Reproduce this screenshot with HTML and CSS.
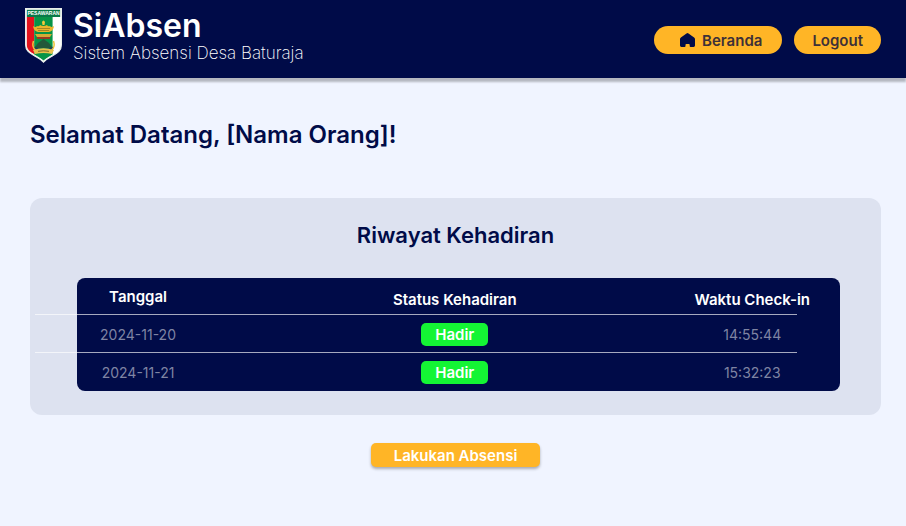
FILE: index.html
```html
<!DOCTYPE html>
<html lang="id">
<head>
  <meta charset="utf-8">
  <meta name="viewport" content="width=device-width, initial-scale=1">
  <title>SiAbsen</title>
  <link rel="stylesheet" href="styles.css">
</head>
<body>
  <header class="topbar">
    <div class="brand">
      <svg class="crest" viewBox="0 0 37 55" aria-hidden="true">
        <path d="M.6.6h35.8v36.2c0 6.4-4.800 8.600-9 11.100-3.600 2.100-6.600 3.600-8.900 6.300-2.300-2.700-5.300-4.200-8.900-6.300C5.400 45.400.6 43.200.6 36.800z" fill="#fff"/>
        <path d="M1.800 1.800h33.400v7.200H1.800z" fill="#087a48"/>
        <path d="M1.800 9h7.400v37.200c-4-2.300-7.400-4.400-7.400-9.400z" fill="#e3121b"/>
        <path d="M9.200 9h18.400v37.400c-3.500 2.100-6.800 3.700-9.100 6.200-2.300-2.500-5.600-4.100-9.300-6.200z" fill="#079447"/>
        <text class="crest-name" x="18.500" y="7.200" text-anchor="middle">PESAWARAN</text>
        <path d="M17 14q1.500-3 3 0l-.5 3h-2z" fill="#f5c83b"/>
        <path d="M8 18q2.500 2 4 0 2 1 3-1 3.500 2 7 0 1 2 3 1 1.500 2 4 0-.5 5-5 6H13q-4.500-1-5-6z" fill="#e9b52c"/>
        <path d="M12 20.500h13M13 22.500h11" stroke="#79651c" stroke-width=".6"/>
        <path d="M10 26h17l-2 3H12z" fill="#d5ab35"/>
        <path d="M12 29h13v2H12z" fill="#983a22"/>
        <path d="M8 40q3-1 5-5l5.500-4 5.500 4q2 4 5 5z" fill="#24583a"/>
        <path d="M9 39q9.500 4 19 0v3q-9.500 3-19 0z" fill="#173f67"/>
        <path d="M8.500 33q-2 6 2 9M28.500 33q2 6-2 9" fill="none" stroke="#edc43d" stroke-width="1.500"/>
        <path d="M8 42q10.500-3.500 21 0l-2 4q-8.500-2-17 0z" fill="#e9c24c"/>
        <path d="M13 43.300q5.500-1 11 0" fill="none" stroke="#594e20" stroke-width=".8"/>
        <path d="M.6.6h35.8v36.2c0 6.400-4.800 8.600-9 11.100-3.600 2.100-6.600 3.600-8.900 6.300-2.300-2.700-5.300-4.200-8.900-6.300C5.400 45.400.6 43.200.6 36.800z" fill="none" stroke="#e8eee9" stroke-width="1.200"/>
      </svg>
      <div class="brand-text">
        <h1 class="brand-name">SiAbsen</h1>
        <p class="brand-tagline">Sistem Absensi Desa Baturaja</p>
      </div>
    </div>
    <nav class="nav">
      <a class="pill pill-home" href="#">
        <svg class="home-icon" viewBox="0 0 15 14" aria-hidden="true">
          <path d="M6.500.4q1-.7 2 0l5.600 4.100q.9.700.9 1.800v6.300q0 1.400-1.400 1.400h-3q-.9 0-.9-.9v-1.300q0-.9-.9-.9H6.400q-.9 0-.9.900v1.300q0 .9-.9.9H1.400Q0 14 0 12.600V6.300q0-1.100.9-1.800z" fill="currentColor"/>
        </svg>
        Beranda
      </a>
      <button class="pill" type="button">Logout</button>
    </nav>
  </header>

  <main class="content">
    <h2 class="heading">Selamat Datang, [Nama Orang]!</h2>
    <section class="panel" aria-labelledby="history-title">
      <h2 class="heading panel-title" id="history-title">Riwayat Kehadiran</h2>
      <div class="history-wrap">
        <table class="history">
          <colgroup>
            <col class="col-date">
            <col class="col-status">
            <col class="col-time">
          </colgroup>
          <thead>
            <tr><th class="date" scope="col">Tanggal</th><th class="status" scope="col">Status Kehadiran</th><th scope="col">Waktu Check-in</th></tr>
          </thead>
          <tbody>
            <tr><td>2024-11-20</td><td class="status"><span class="badge">Hadir</span></td><td>14:55:44</td></tr>
            <tr><td>2024-11-21</td><td class="status"><span class="badge">Hadir</span></td><td>15:32:23</td></tr>
          </tbody>
        </table>
      </div>
    </section>
    <button class="action" type="button">Lakukan Absensi</button>
  </main>
</body>
</html>
```
FILE: styles.css
```css
:root {
  --navy: #000b48;
  --orange: #ffb526;
}

* {
  box-sizing: border-box;
}

body {
  margin: 0;
  background: #f0f4ff;
  color: var(--navy);
  font-family: Inter, "Open Sans", sans-serif;
  font-size: 14px;
}

h1, h2, p {
  margin: 0;
}

.topbar {
  display: flex;
  align-items: center;
  justify-content: space-between;
  padding: 8px 25px 6px;
  min-height: 78px;
  background: var(--navy);
  box-shadow: 0 4px 2px rgba(0, 0, 0, 0.25);
}

.brand {
  display: flex;
  gap: 11px;
  align-self: flex-start;
}

.crest {
  width: 37px;
  height: 55px;
}

.crest-name {
  fill: #fff;
  font-family: "Liberation Sans", sans-serif;
  font-size: 5px;
  font-weight: 700;
}

.brand-text {
  color: #fff;
}

.brand-name {
  font-size: 32px;
  line-height: 36px;
  font-weight: 600;
}

.brand-tagline {
  font-size: 17px;
  line-height: 18px;
  font-weight: 200;
}

.nav {
  display: flex;
  gap: 12px;
}

.pill {
  display: flex;
  align-items: center;
  gap: 7px;
  height: 28px;
  padding: 0 18px;
  border: 0;
  border-radius: 14px;
  background: var(--orange);
  color: #3d3038;
  font: inherit;
  font-size: 15px;
  font-weight: 600;
  text-decoration: none;
}

.pill-home {
  padding: 0 20px 0 26px;
}

.home-icon {
  width: 15px;
  height: 14px;
  color: var(--navy);
}

.content {
  padding: 42px 25px 24px 30px;
}

.heading {
  font-size: 24px;
  line-height: 30px;
  font-weight: 600;
}

.panel {
  margin-top: 48px;
  padding: 22px 0 24px;
  border-radius: 12px;
  background: #dde2f0;
}

.panel-title {
  margin-bottom: 28px;
  font-size: 22px;
  text-align: center;
}

.history-wrap {
  padding: 0 41px 0 47px;
}

.history {
  width: 100%;
  table-layout: fixed;
  border-spacing: 0;
  border-radius: 8px;
  background: var(--navy);
  text-align: center;
}

.col-date {
  width: 16%;
}

.col-status {
  width: 61%;
}

.col-time {
  width: 23%;
}

.history tr {
  position: relative;
  height: 38px;
}

.history thead tr {
  height: 37px;
}

.history th {
  padding: 0 0 6px;
  color: #fff;
  font-size: 15px;
  font-weight: 600;
  vertical-align: bottom;
}

.history .date {
  padding: 0;
  vertical-align: middle;
}

.history td {
  padding: 0;
  color: #7f84a3;
}

.history .status {
  padding-left: 46px;
}

/* Row rules run past the left edge of the table and stop short of the right */
.history tbody tr::after {
  content: "";
  position: absolute;
  top: -1px;
  left: -42px;
  right: 43px;
  height: 1px;
  background: rgba(255, 255, 255, 0.65);
}

.badge {
  display: inline-block;
  padding: 0 14px;
  border-radius: 5px;
  background: #14f534;
  color: #fff;
  font-size: 15px;
  font-weight: 600;
  line-height: 23px;
}

.action {
  display: block;
  height: 24px;
  margin: 28px auto 0;
  padding: 0 23px;
  border: 0;
  border-radius: 5px;
  background: var(--orange);
  box-shadow: 0 2px 3px rgba(0, 0, 0, 0.3);
  color: #fff;
  font: inherit;
  font-size: 15px;
  font-weight: 600;
}
```
